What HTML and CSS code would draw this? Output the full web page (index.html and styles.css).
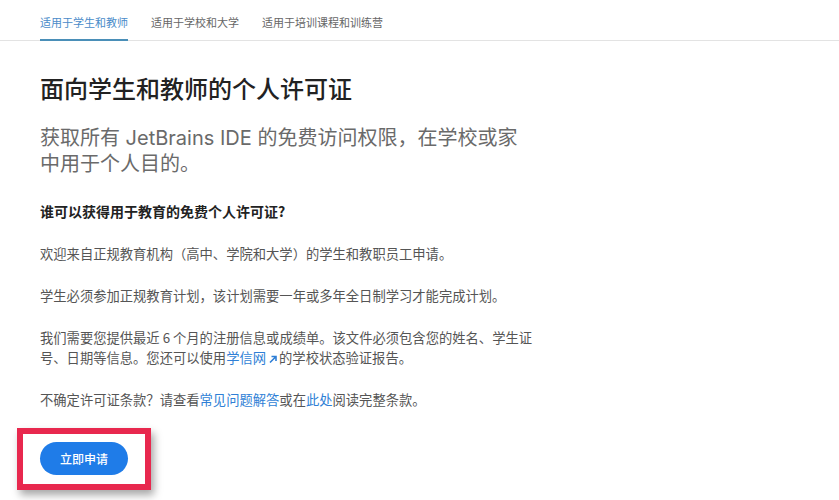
FILE: index.html
```html
<!DOCTYPE html>
<html lang="zh-CN">
<head>
<meta charset="utf-8">
<title>面向学生和教师的个人许可证</title>
<link rel="stylesheet" href="styles.css">
</head>
<body>
<nav class="tabs">
  <a class="tab active">适用于学生和教师</a>
  <a class="tab">适用于学校和大学</a>
  <a class="tab">适用于培训课程和训练营</a>
</nav>
<main class="content">
  <h1 class="title">面向学生和教师的个人许可证</h1>
  <p class="lead">获取所有 JetBrains IDE 的免费访问权限，在学校或家中用于个人目的。</p>
  <h2 class="question">谁可以获得用于教育的免费个人许可证?</h2>
  <p class="text first">欢迎来自正规教育机构（高中、学院和大学）的学生和教职员工申请。</p>
  <p class="text">学生必须参加正规教育计划，该计划需要一年或多年全日制学习才能完成计划。</p>
  <p class="text wide">我们需要您提供最近 6 个月的注册信息或成绩单。该文件必须包含您的姓名、学生证号、日期等信息。您还可以使用<a class="link">学信网<svg class="arrow" viewBox="0 0 10 10" width="10" height="10" aria-hidden="true"><path d="M2 8.5L8 2.5M3.5 2.5H8V7" fill="none" stroke="currentColor" stroke-width="1.6"/></svg></a>的学校状态验证报告。</p>
  <p class="text">不确定许可证条款？请查看<a class="link">常见问题解答</a>或在<a class="link">此处</a>阅读完整条款。</p>
  <div class="highlight">
    <button class="apply">立即申请</button>
  </div>
</main>
</body>
</html>
```
FILE: styles.css
```css
* { box-sizing: border-box; }
html, body { margin: 0; padding: 0; background: #ffffff; }
body {
  font-family: "Inter", "Noto Sans CJK SC", sans-serif;
  color: #555;
  width: 839px;
  height: 500px;
  overflow: hidden;
}
.tabs {
  display: flex;
  gap: 23px;
  padding: 0 40px;
  border-bottom: 1px solid #e3e3e3;
  height: 41px;
}
.tab {
  font-family: "Noto Sans CJK SC", sans-serif;
  font-size: 11px;
  color: #666;
  line-height: 40px;
  padding-top: 2px;
  border-bottom: 2px solid transparent;
  height: 41px;
}
.tab.active {
  color: #4a8bc9;
  border-bottom-color: #4a8fb8;
}
.content {
  padding: 0 40px;
}
.title {
  margin: 30px 0 0;
  font-family: "Noto Sans CJK SC", sans-serif;
  font-size: 24px;
  font-weight: 500;
  color: #222;
  line-height: 34px;
}
.lead {
  margin: 20px 0 0;
  max-width: 486px;
  font-size: 20px;
  line-height: 26px;
  color: #6a6a6a;
}
.question {
  margin: 24px 0 0;
  font-family: "Noto Sans CJK SC", sans-serif;
  font-size: 14px;
  font-weight: 700;
  color: #222;
  line-height: 20px;
}
.text {
  margin: 22px 0 0;
  max-width: 490px;
  font-family: "Noto Sans CJK SC", sans-serif;
  font-size: 13.3px;
  line-height: 20px;
  color: #555;
}
.text.first { margin-top: 23px; }
.text.wide { max-width: 502px; }
.link { color: #2f7fd6; }
.arrow {
  display: inline-block;
  vertical-align: -1px;
  margin: 0 1px 0 2px;
}
.highlight {
  display: inline-block;
  margin: 18px 0 0 -23px;
  padding: 8px 17px 9px 17px;
  border: 6px solid #e8284e;
  box-shadow: 3px 5px 8px rgba(0,0,0,0.35);
  background: #fff;
}
.apply {
  display: block;
  width: 88px;
  height: 33px;
  border: 0;
  border-radius: 17px;
  background: #1f7ce8;
  color: #fff;
  font-family: "Noto Sans CJK SC", sans-serif;
  font-size: 12px;
  font-weight: 500;
}
```
